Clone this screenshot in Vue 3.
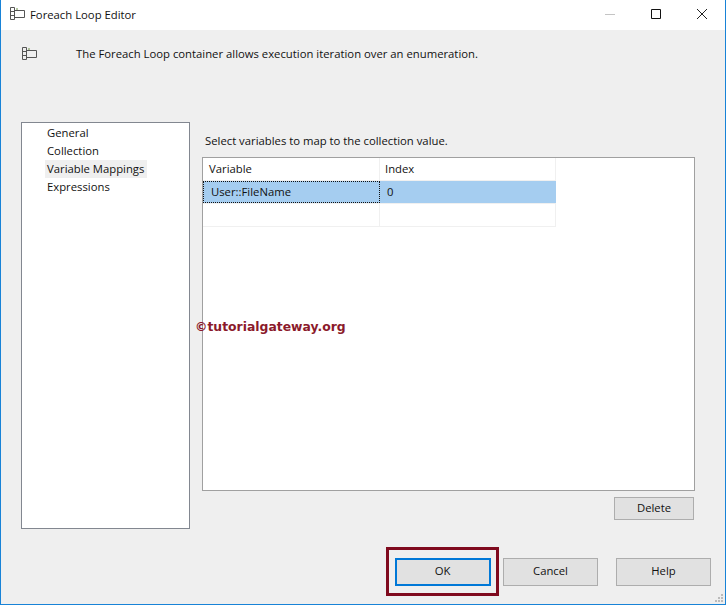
<script setup>
const pages = ['General', 'Collection', 'Variable Mappings', 'Expressions']
const activePage = 'Variable Mappings'
</script>

<template>
  <div class="dialog">
    <div class="title-bar">
      <svg class="loop-icon" width="15" height="14" viewBox="0 0 15 14">
        <path d="M.5.5h4v12h-4zM.5 4.5h4M.5 8.5h4M4.5 3.5h10v7h-10" fill="none" stroke="#555" />
        <path d="M6 2h2" stroke="#6a8f45" fill="none" />
      </svg>
      <span class="title">Foreach Loop Editor</span>
      <div class="window-buttons">
        <svg width="12" height="12" viewBox="0 0 12 12"><path d="M1 6.5h10" stroke="#c4c4c4" /></svg>
        <svg width="12" height="12" viewBox="0 0 12 12"><path d="M1.5 1.5h9v9h-9z" fill="none" stroke="#111" /></svg>
        <svg width="12" height="12" viewBox="0 0 12 12"><path d="M1 1l10 10M11 1L1 11" fill="none" stroke="#222" /></svg>
      </div>
    </div>

    <div class="description">
      <svg class="loop-icon" width="15" height="14" viewBox="0 0 15 14">
        <path d="M.5.5h4v12h-4zM.5 4.5h4M.5 8.5h4M4.5 3.5h10v7h-10" fill="none" stroke="#555" />
        <path d="M6 2h2" stroke="#6a8f45" fill="none" />
      </svg>
      <span>The Foreach Loop container allows execution iteration over an enumeration.</span>
    </div>

    <div class="content">
      <ul class="nav">
        <li v-for="page in pages" :key="page" :class="{ active: page === activePage }">{{ page }}</li>
      </ul>

      <div class="panel">
        <p class="hint">Select variables to map to the collection value.</p>
        <div class="grid-box">
          <div class="row header">
            <div class="cell">Variable</div>
            <div class="cell">Index</div>
          </div>
          <div class="row selected">
            <div class="cell focused">User::FileName</div>
            <div class="cell index">0</div>
          </div>
          <div class="row">
            <div class="cell"></div>
            <div class="cell"></div>
          </div>
        </div>
        <div class="panel-actions">
          <button class="btn delete">Delete</button>
        </div>
      </div>
    </div>

    <div class="footer">
      <div class="ok-mark">
        <button class="btn ok">OK</button>
      </div>
      <button class="btn cancel">Cancel</button>
      <button class="btn help">Help</button>
    </div>

    <!-- watermark sits over the grid -->
    <div class="watermark">©tutorialgateway.org</div>

    <svg class="grip" width="12" height="12" viewBox="0 0 12 12">
      <path d="M9 3h2v2H9zM6 6h2v2H6zM9 6h2v2H9zM3 9h2v2H3zM6 9h2v2H6zM9 9h2v2H9z" fill="#bbb" />
    </svg>
  </div>
</template>

<style scoped>
.dialog {
  position: relative;
  width: 726px;
  height: 605px;
  box-sizing: border-box;
  border: 1px solid #1883d7;
  border-top: 0;
  background: #efefef;
  display: flex;
  flex-direction: column;
  font-family: "Open Sans", "Noto Sans", sans-serif;
  font-size: 11.3px;
  color: #111;
  overflow: hidden;
}

.title-bar {
  height: 30px;
  flex: none;
  background: #fff;
  display: flex;
  align-items: center;
  padding-left: 9px;
}

.title-bar .loop-icon {
  margin-bottom: 2px;
}

.title {
  margin-left: 5px;
  margin-bottom: 2px;
}

.window-buttons {
  margin-left: auto;
  margin-bottom: 2px;
  display: flex;
  gap: 34px;
  padding-right: 17px;
}

.loop-icon {
  flex: none;
}

.description {
  height: 48px;
  flex: none;
  display: flex;
  align-items: flex-start;
  padding: 17px 0 0 21px;
  box-sizing: border-box;
}

.description span {
  margin-left: 39px;
  margin-top: -1px;
}

.content {
  display: flex;
  margin-top: 44px;
  padding-left: 20px;
  height: 407px;
  flex: none;
}

.nav {
  width: 169px;
  box-sizing: border-box;
  margin: 0;
  padding: 1px 0 0 23px;
  list-style: none;
  background: #fff;
  border: 1px solid #828790;
}

.nav li {
  height: 18px;
  line-height: 17px;
  padding-left: 2px;
  width: fit-content;
}

.nav li.active {
  background: #efefef;
  padding-right: 3px;
}

.panel {
  margin-left: 12px;
  width: 493px;
  display: flex;
  flex-direction: column;
}

.hint {
  margin: 10px 0 0 3px;
  height: 25px;
  line-height: 17px;
}

.grid-box {
  height: 334px;
  box-sizing: border-box;
  background: #fff;
  border: 1px solid #a0a0a0;
  flex: none;
}

.row {
  display: flex;
  width: 353px;
  height: 23px;
  box-sizing: border-box;
  border-bottom: 1px solid #f0f0f0;
}

.cell {
  width: 177px;
  box-sizing: border-box;
  padding-left: 6px;
  line-height: 21px;
  border-right: 1px solid #f0f0f0;
}

.cell + .cell {
  width: 176px;
  padding-left: 5px;
}

.row.selected {
  background: #a5cdf0;
}

.row.selected .cell {
  border-right: 0;
}

.cell.focused {
  outline: 1px dotted #111;
  outline-offset: -1px;
  padding-left: 8px;
}

.cell.index {
  padding-left: 7px;
}

.panel-actions {
  display: flex;
  justify-content: flex-end;
  padding: 6px 1px 0 0;
}

.btn {
  box-sizing: border-box;
  background: #e1e1e1;
  border: 1px solid #adadad;
  font: inherit;
  color: #111;
  padding: 0 0 3px;
}

.delete {
  width: 80px;
  height: 23px;
}

.footer {
  display: flex;
  align-items: center;
  height: 49px;
  margin-top: 18px;
  padding-left: 385px;
  flex: none;
}

.ok-mark {
  width: 113px;
  height: 49px;
  box-sizing: border-box;
  border: 3px solid #7f0a1e;
  display: flex;
  align-items: center;
  justify-content: center;
}

.ok {
  width: 96px;
  height: 28px;
  border: 2px solid #0078d7;
}

.cancel {
  width: 95px;
  height: 28px;
  margin-left: 4px;
}

.help {
  width: 95px;
  height: 28px;
  margin-left: 18px;
}

.watermark {
  position: absolute;
  left: 194px;
  top: 318px;
  font-family: "DejaVu Sans", sans-serif;
  font-weight: 700;
  font-size: 12.4px;
  color: #8b1a2b;
  line-height: 18px;
}

.grip {
  position: absolute;
  right: 1px;
  bottom: 1px;
}
</style>

<style>
html, body {
  margin: 0;
  background: #fff;
}
</style>
